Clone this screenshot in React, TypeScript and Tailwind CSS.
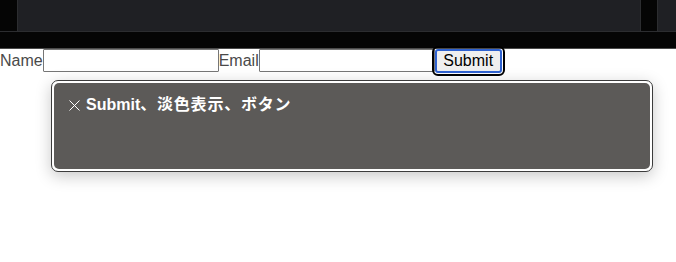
import React from "react";

export default function App() {
  return (
    <div className="relative w-[676px] h-[262px] overflow-hidden bg-white font-['Liberation_Sans','Noto_Sans_CJK_JP',sans-serif]">
      {/* top dark area */}
      <div className="h-[49px] bg-[#050505] border-b border-[#4a4a4a] flex flex-col">
        <div className="flex h-[32px]">
          <div className="w-[17px] border-b border-[#2c2d30]" />
          <div className="w-[624px] bg-[#1f2024] border-l border-r border-b border-[#2c2d30]" />
          <div className="w-[16px] border-b border-[#2c2d30]" />
          <div className="flex-1 bg-[#1f2024] border-l border-b border-[#2c2d30]" />
        </div>
      </div>

      {/* form row */}
      <div className="flex items-start h-[28px]">
        <span className="text-[16px] leading-[23px] text-[#4a4a4a]">Name</span>
        <div className="w-[176px] h-[23px] border border-[#767676] bg-white rounded-[1px]" />
        <span className="text-[16px] leading-[23px] text-[#4a4a4a]">Email</span>
        <div className="w-[176px] h-[23px] border border-[#767676] bg-white rounded-[1px]" />
        <button className="w-[67px] h-[24px] border-2 border-[#2f62d0] bg-[#efefef] rounded-[3px] text-[16px] leading-[18px] text-black outline-2 outline-black outline-offset-1 flex items-center justify-center p-0">
          Submit
        </button>
      </div>

      {/* tooltip */}
      <div className="absolute left-[51px] top-[80px] w-[602px] h-[92px] rounded-[7px] border border-[#3c3c3c] bg-white p-[2px] shadow-[0_4px_16px_rgba(0,0,0,0.22)]">
        <div className="h-full rounded-[5px] bg-[#5c5a58] pl-[15px] pt-[12px]">
          <div className="flex items-center text-white text-[16px] leading-[20px]">
            <svg width="11" height="11" viewBox="0 0 11 11" className="mr-[6px] mt-[1px]">
              <path d="M0.5 0.5 L10.5 10.5 M10.5 0.5 L0.5 10.5" stroke="#ffffff" strokeWidth="1" fill="none" />
            </svg>
            <span className="font-bold">Submit</span>
            <span className="font-bold tracking-[0.8px]">、淡色表示、ボタン</span>
          </div>
        </div>
      </div>
    </div>
  );
}
